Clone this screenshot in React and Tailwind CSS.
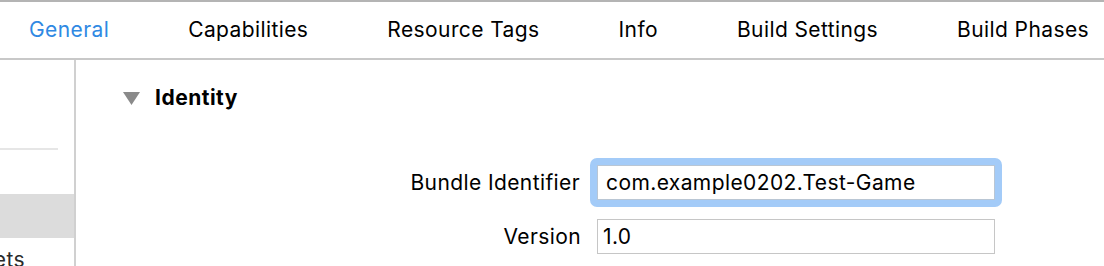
import React from 'react';

const tabs = ["General", "Capabilities", "Resource Tags", "Info", "Build Settings", "Build Phases"];

export default function App() {
  return (
    <div className="w-[1104px] h-[266px] overflow-hidden bg-white text-black font-['Inter','Noto_Sans',sans-serif] text-[21px] tracking-[0.4px]">
      {/* tab bar */}
      <div className="h-[60px] border-t-2 border-t-[#b4b4b4] border-b-2 border-b-[#c8c8c8] flex items-center pl-[29px] gap-[79px] whitespace-nowrap">
        {tabs.map((t, i) => (
          <span key={t} className={i === 0 ? "text-[#2f89e3]" : "text-black"}>{t}</span>
        ))}
      </div>

      <div className="flex h-[206px]">
        {/* sidebar */}
        <div className="w-[76px] shrink-0 border-r-2 border-r-[#d0d0d0] overflow-hidden">
          <div className="h-[90px] border-b-2 border-b-[#e6e6e6] w-[58px]" />
          <div className="h-[44px] mt-[44px] bg-[#dcdcdc]" />
          <div className="text-[#2a2a2a] whitespace-nowrap -ml-[52px] mt-[10px] leading-[24px]">Targets</div>
        </div>

        {/* main */}
        <div className="flex-1 pl-[47px]">
          <div className="flex items-center h-[32px] mt-[22px] gap-[15px]">
            <svg width="17" height="14" viewBox="0 0 17 14" className="shrink-0">
              <path d="M0 1 H17 L8.5 14 Z" fill="#8a8a8a" />
            </svg>
            <span className="text-[21px] font-bold tracking-[0.5px]">Identity</span>
          </div>

          <div className="flex flex-col mt-[51px]">
            <div className="flex items-center h-[35px]">
              <div className="w-[474px] pr-[17px] text-right whitespace-nowrap">Bundle Identifier</div>
              <div className="-m-[7px] p-[7px] rounded-[7px] bg-[#a3cbf8]">
                <div className="w-[398px] h-[35px] bg-white border border-[#b9c6d4] flex items-center pl-[8px] whitespace-nowrap">
                  com.example0202.Test-Game
                </div>
              </div>
            </div>
            <div className="flex items-center h-[35px] mt-[19px]">
              <div className="w-[474px] pr-[16px] text-right whitespace-nowrap">Version</div>
              <div className="w-[398px] h-[35px] bg-white border border-[#c6c6c6] flex items-center pl-[5px]">
                1.0
              </div>
            </div>
          </div>
        </div>
      </div>
    </div>
  );
}
